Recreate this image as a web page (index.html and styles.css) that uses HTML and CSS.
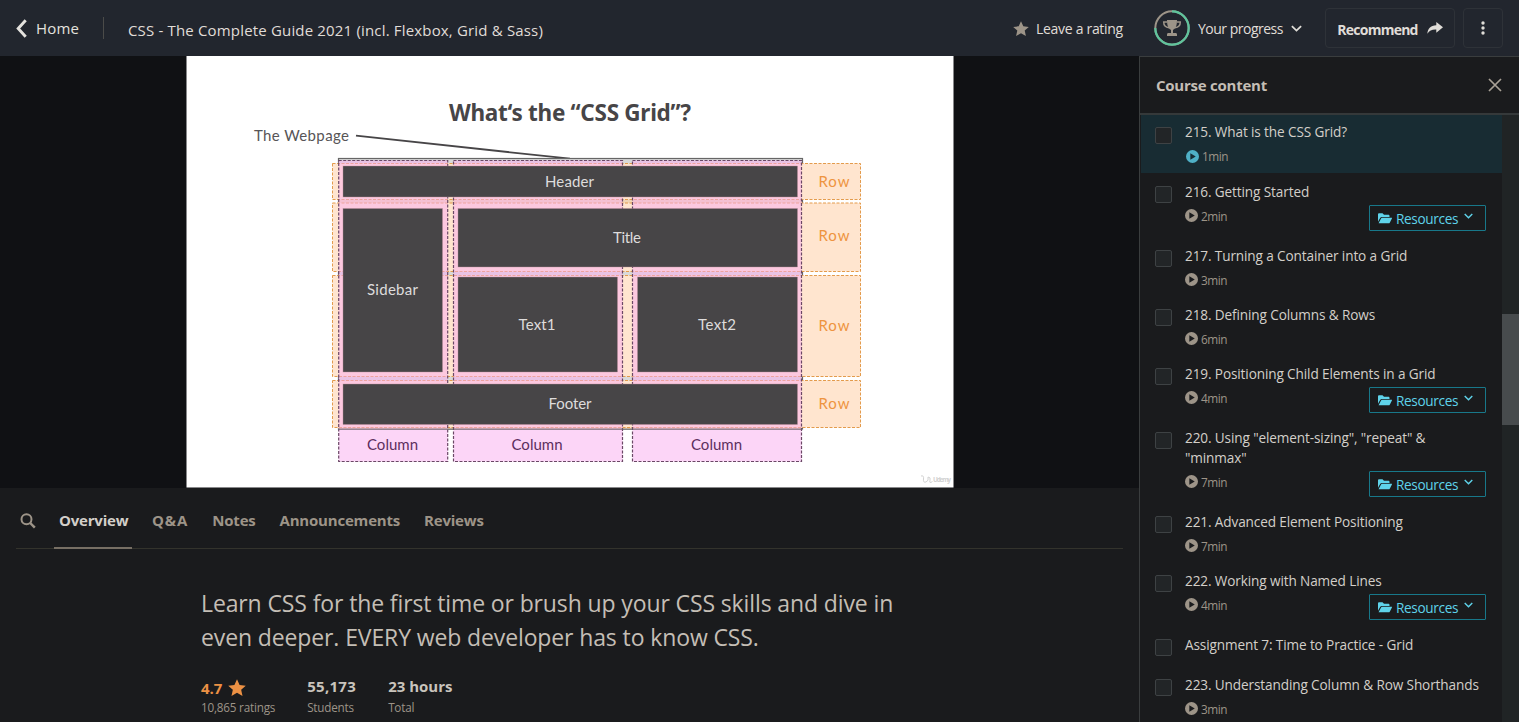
FILE: index.html
```html
<!DOCTYPE html>
<html lang="en">
<head>
<meta charset="utf-8">
<title>CSS - The Complete Guide 2021</title>
<link rel="stylesheet" href="styles.css">
</head>
<body>
<svg class="defs" width="0" height="0">
  <symbol id="play" viewBox="0 0 12 12"><path fill-rule="evenodd" d="M6 0a6 6 0 1 0 0 12A6 6 0 0 0 6 0zM4 3l5 3-5 3z"/></symbol>
  <symbol id="star" viewBox="0 0 16 16"><path d="M8 .3l2.300 5 5.500.6-4.100 3.700 1.200 5.500L8 12.300l-4.900 2.800 1.200-5.500L.2 5.900l5.500-.6z"/></symbol>
  <symbol id="folder" viewBox="0 0 14 11"><path d="M0 8.700V1.300C0 .6.500.2 1.200.2h3.300l1.500 1.500h4.300c.7 0 1.200.4 1.200 1.100v1.100H4c-.8 0-1.500.4-1.900 1.100z"/><path d="M.6 10.300l2.300-4.600c.3-.6.700-.9 1.300-.9h9.400c.4 0 .5.300.3.700l-2 3.900c-.3.600-.7.900-1.300.9z"/></symbol>
  <symbol id="chev" viewBox="0 0 10 6"><path d="M.8.8L5 4.900 9.200.8" fill="none" stroke="currentColor" stroke-width="1.600"/></symbol>
</svg>
<header class="topbar">
  <a class="home"><svg width="11" height="19" viewBox="0 0 11 19"><path d="M9.700 1.200L2.200 9.500l7.500 8.300" fill="none" stroke="currentColor" stroke-width="2.900"/></svg><span>Home</span></a>
  <span class="rule"></span>
  <h1 class="course">CSS - The Complete Guide 2021 (incl. Flexbox, Grid &amp; Sass)</h1>
  <a class="rate"><svg width="16" height="16"><use href="#star"/></svg><span>Leave a rating</span></a>
  <a class="progress">
    <svg class="ring" width="36" height="36" viewBox="0 0 36 36"><circle cx="18" cy="18" r="16.700" fill="none" stroke="#9d9488" stroke-width="2"/><path d="M18 1.300A16.700 16.700 0 1 1 1.300 18" fill="none" stroke="#5fc49c" stroke-width="2.200"/><g fill="#9d9488"><path d="M13 10h10c0 6-1.500 9-4 9.800V23h2.500c1 0 1.500.6 1.500 1.600V26H13v-1.400c0-1 .5-1.600 1.500-1.600H17v-3.200c-2.500-.8-4-3.800-4-9.800z"/><path d="M13 12H9.700c0 3.300 1.700 5.400 5.300 5.700M23 12h3.300c0 3.300-1.700 5.400-5.300 5.700" fill="none" stroke="#9d9488" stroke-width="1.500"/></g></svg>
    <span>Your progress</span><svg class="chev" width="11" height="7"><use href="#chev"/></svg>
  </a>
  <button class="box recommend"><span>Recommend</span><svg width="16" height="12" viewBox="0 0 16 12"><path d="M9.300 0L16 5.300l-6.700 5.400V7.500C5 7.300 2.500 8.300.4 11.800.5 6.700 3.500 3.500 9.300 3.200z"/></svg></button>
  <button class="box kebab"><svg width="4" height="14" viewBox="0 0 4 14"><circle cx="2" cy="2" r="1.700"/><circle cx="2" cy="7" r="1.700"/><circle cx="2" cy="12" r="1.700"/></svg></button>
</header>
<div class="page">
  <main class="main">
    <div class="stage">
      <svg class="slide" width="768" height="432" viewBox="186 56 768 432">
        <rect x="186.500" y="56" width="767" height="431.500" fill="#fff"/>
        <text class="s-title" x="449" y="120.500" textLength="242">What‘s the “CSS Grid”?</text>
        <text class="s-label" x="254" y="141" textLength="95">The Webpage</text>
        <path d="M356 135.700L570 158.700" stroke="#474547" stroke-width="1.800"/>
        <rect x="338.500" y="158.500" width="464" height="270.500" fill="#d9d9d9" stroke="#666" stroke-width="1.200"/>
        <path d="M338 200h464v3H338zM338 425h464v4H338z" fill="#f1d5b5"/>
        <g class="s-row"><rect x="332.500" y="163.500" width="528" height="36"/><rect x="332.500" y="203" width="528" height="68.500"/><rect x="332.500" y="275.500" width="528" height="101"/><rect x="332.500" y="380.500" width="528" height="47"/></g>
        <g class="s-col"><rect x="338.700" y="160.500" width="109" height="301"/><rect x="453.500" y="160.500" width="169" height="301"/><rect x="632.500" y="160.500" width="169" height="301"/></g>
        <g class="s-pad"><path d="M340 165H446V198H340zM455 165H621V198H455zM634 165H800V198H634z"/></g>
        <path d="M338 429.200H802" stroke="#666" stroke-width="1.200" opacity=".7"/>
        <g class="s-item"><rect x="343" y="166" width="454.500" height="31"/><rect x="343" y="208.500" width="99.500" height="163.500"/><rect x="458" y="208.500" width="339.500" height="58.500"/><rect x="458" y="277" width="159.500" height="95"/><rect x="637.500" y="277" width="160" height="95"/><rect x="343" y="384" width="454.500" height="40.500"/></g>
        <g class="s-white"><text x="545" y="187" textLength="49">Header</text><text x="613" y="243" textLength="28">Title</text><text x="367" y="295" textLength="51">Sidebar</text><text x="518.500" y="330" textLength="37">Text1</text><text x="698" y="330" textLength="38">Text2</text><text x="548.500" y="409" textLength="43">Footer</text></g>
        <g class="s-purple"><text x="367" y="450" textLength="51">Column</text><text x="511.500" y="450" textLength="51">Column</text><text x="691" y="450" textLength="51">Column</text></g>
        <g class="s-orange"><text x="818.500" y="187" textLength="31">Row</text><text x="818.500" y="241" textLength="31">Row</text><text x="818.500" y="331" textLength="31">Row</text><text x="818.500" y="409" textLength="31">Row</text></g>
        <path d="M921 476q3-1 2.500 3t2.500 3 2-5q3 0 2 3.500t2.500 1" fill="none" stroke="#d2d2d2"/>
        <text class="s-mark" x="933" y="482" textLength="18">Udemy</text>
      </svg>
    </div>
    <nav class="tabs">
      <svg class="search" width="16" height="16" viewBox="0 0 16 16"><circle cx="6.500" cy="6.300" r="5" fill="none" stroke="currentColor" stroke-width="2"/><path d="M10.200 10l4.600 4.700" stroke="currentColor" stroke-width="2.500"/></svg>
      <a class="tab active">Overview</a><a class="tab qa">Q&amp;A</a><a class="tab">Notes</a><a class="tab">Announcements</a><a class="tab">Reviews</a>
    </nav>
    <section class="about">
      <p class="lead">Learn CSS for the first time or brush up your CSS skills and dive in<br>even deeper. EVERY web developer has to know CSS.</p>
      <div class="stats">
        <div class="stat rating"><b>4.7<svg width="18" height="18"><use href="#star"/></svg></b><small>10,865 ratings</small></div>
        <div class="stat students"><b>55,173</b><small>Students</small></div>
        <div class="stat"><b>23 hours</b><small>Total</small></div>
      </div>
    </section>
  </main>
  <aside class="side">
    <div class="side-head"><h2>Course content</h2><svg width="14" height="14" viewBox="0 0 14 14"><path d="M1 1l12 12M13 1L1 13" stroke="currentColor" stroke-width="1.700"/></svg></div>
    <div class="scroll">
      <ul class="list">
        <li class="item current"><i class="check"></i><div class="body"><p>215. What is the CSS Grid?</p><div class="meta"><span class="time"><svg width="13" height="13"><use href="#play"/></svg>1min</span></div></div></li>
        <li class="item"><i class="check"></i><div class="body"><p>216. Getting Started</p><div class="meta"><span class="time"><svg width="13" height="13"><use href="#play"/></svg>2min</span><button class="res"><svg width="14" height="11"><use href="#folder"/></svg><span>Resources</span><svg class="chev" width="9" height="6"><use href="#chev"/></svg></button></div></div></li>
        <li class="item"><i class="check"></i><div class="body"><p>217. Turning a Container into a Grid</p><div class="meta"><span class="time"><svg width="13" height="13"><use href="#play"/></svg>3min</span></div></div></li>
        <li class="item"><i class="check"></i><div class="body"><p>218. Defining Columns &amp; Rows</p><div class="meta"><span class="time"><svg width="13" height="13"><use href="#play"/></svg>6min</span></div></div></li>
        <li class="item"><i class="check"></i><div class="body"><p>219. Positioning Child Elements in a Grid</p><div class="meta"><span class="time"><svg width="13" height="13"><use href="#play"/></svg>4min</span><button class="res"><svg width="14" height="11"><use href="#folder"/></svg><span>Resources</span><svg class="chev" width="9" height="6"><use href="#chev"/></svg></button></div></div></li>
        <li class="item"><i class="check"></i><div class="body"><p>220. Using "element-sizing", "repeat" &amp;<br>"minmax"</p><div class="meta"><span class="time"><svg width="13" height="13"><use href="#play"/></svg>7min</span><button class="res"><svg width="14" height="11"><use href="#folder"/></svg><span>Resources</span><svg class="chev" width="9" height="6"><use href="#chev"/></svg></button></div></div></li>
        <li class="item"><i class="check"></i><div class="body"><p>221. Advanced Element Positioning</p><div class="meta"><span class="time"><svg width="13" height="13"><use href="#play"/></svg>7min</span></div></div></li>
        <li class="item"><i class="check"></i><div class="body"><p>222. Working with Named Lines</p><div class="meta"><span class="time"><svg width="13" height="13"><use href="#play"/></svg>4min</span><button class="res"><svg width="14" height="11"><use href="#folder"/></svg><span>Resources</span><svg class="chev" width="9" height="6"><use href="#chev"/></svg></button></div></div></li>
        <li class="item"><i class="check"></i><div class="body"><p>Assignment 7: Time to Practice - Grid</p></div></li>
        <li class="item"><i class="check"></i><div class="body"><p>223. Understanding Column &amp; Row Shorthands</p><div class="meta"><span class="time"><svg width="13" height="13"><use href="#play"/></svg>3min</span></div></div></li>
      </ul>
      <div class="track"><div class="thumb"></div></div>
    </div>
  </aside>
</div>
</body>
</html>
```
FILE: styles.css
```css
* { box-sizing: border-box; }
body { margin: 0; height: 722px; overflow: hidden; background: #1a1b1d; color: #d3cfc9; font: 13.600px/20px "Open Sans", "Noto Sans", sans-serif; }
h1, h2, p, ul { margin: 0; padding: 0; font-weight: 400; }
svg { display: block; flex: none; fill: currentColor; }
button { font: inherit; color: inherit; background: none; margin: 0; }
span, small, p { white-space: nowrap; }
.defs { position: absolute; }

.topbar { display: flex; align-items: center; height: 56px; padding: 0 16px; background: #22262e; color: #e0ddd8; font-size: 14px; }
.home { display: flex; align-items: center; gap: 9px; width: 80px; padding-top: 1px; font-size: 15px; letter-spacing: .15px; color: #e4e2de; }
.home span { margin-top: -1px; }
.rule { width: 1px; height: 22px; background: #4b4b49; margin: 0 24px 0 7px; }
.course { font-size: 15px; letter-spacing: .17px; padding-top: 3px; margin-right: auto; }
.rate { display: flex; align-items: center; gap: 7px; padding-top: 2px; width: 110px; letter-spacing: -.3px; }
.rate svg { color: #9d9488; }
.progress { display: flex; align-items: center; margin-left: 31px; width: 148px; letter-spacing: -.5px; }
.progress .ring { margin-right: 8px; }
.progress span { padding-top: 2px; width: 85px; }
.progress .chev { margin-left: 8px; }
.box { display: flex; align-items: center; justify-content: center; height: 40px; border: 1px solid #2e3238; border-radius: 4px; padding: 0; }
.recommend { width: 130px; margin-left: 23px; gap: 9px; font-weight: 700; letter-spacing: -.75px; }
.recommend span { padding-top: 3px; }
.kebab { width: 40px; margin-left: 8px; }

.page { display: flex; height: 666px; }
.main { width: 1139px; display: flex; flex-direction: column; }
.stage { display: flex; justify-content: center; height: 432px; background: #101114; }
.s-title { font: 700 22.500px "Noto Sans", sans-serif; fill: #474547; }
.s-label, .s-white, .s-purple, .s-orange { font: 15px Lato, sans-serif; }
.s-label { fill: #575557; }
.s-white { fill: #dedcdc; }
.s-purple { fill: #5c2e5e; }
.s-orange { fill: #ee9440; }
.s-row { fill: #ffe5cf; stroke: #e39b4c; stroke-dasharray: 3 1.500; }
.s-col { fill: rgba(249, 171, 239, .5); stroke: #6b4766; stroke-dasharray: 3 1.500; stroke-width: 1.200; }
.s-pad { fill: #ffc9dc; opacity: .6; }
.s-item { fill: #474547; stroke: #b98a9b; stroke-width: .4; }
.s-mark { font: 700 6.500px "Open Sans", sans-serif; fill: #d2d2d2; }

.tabs { display: flex; height: 61px; margin: 0 16px; border-bottom: 1px solid #33332c; color: #9d9488; font-weight: 700; font-size: 15px; letter-spacing: -.2px; }
.search { margin: 25px 18px 0 4px; }
.tab { padding: 22px 4px 0; margin-right: 16px; height: 61px; }
.qa { letter-spacing: .9px; }
.active { width: 78px; padding-left: 5px; padding-right: 0; color: #d3cfc9; border-bottom: 2px solid #776f64; }
.about { padding: 38px 0 0 201px; }
.lead { font-size: 23px; letter-spacing: -.12px; line-height: 33.500px; color: #c4beb5; }
.stats { display: flex; margin-top: 21px; }
.stat { display: flex; flex-direction: column; margin-right: 32px; }
.stat b { display: flex; align-items: center; gap: 7px; height: 22px; font-size: 15px; color: #c9c4bc; }
.stat small { font-size: 11.700px; letter-spacing: -.2px; line-height: 20px; color: #9d9488; }
.students b { letter-spacing: .3px; }
.rating b { color: #ec9144; padding-top: 3px; }
.rating b svg { margin-left: -1px; }

.side { width: 380px; display: flex; flex-direction: column; border-left: 1px solid #3a3d3e; border-top: 1px solid #3a3d3e; }
.side-head { display: flex; align-items: center; justify-content: space-between; flex: none; height: 58px; padding: 0 17px 0 16px; border-bottom: 2px solid #35393a; color: #a9a196; }
.side-head h2 { font-size: 15px; font-weight: 700; letter-spacing: -.24px; color: #c4beb5; }
.scroll { display: flex; flex: 1; min-height: 0; }
.list { width: 362px; margin-top: -1px; list-style: none; }
.item { display: flex; min-height: 40px; padding: 9px 16px 6px 15px; }
.current { margin-left: 1px; padding-left: 14px; background: #182c33; border-top: 1px solid #35393a; padding-top: 7px; padding-bottom: 7px; }
.check { flex: none; width: 17px; height: 17px; margin: 4px 13px 0 0; border: 1px solid #3e4244; border-radius: 2px; background: #222527; }
.current .check { margin-top: 5px; }
.body { flex: 1; letter-spacing: -.12px; }
.meta { display: flex; justify-content: space-between; align-items: flex-start; margin-top: 3px; }
.current .meta { margin-top: 4px; padding-bottom: 0; }
.current .time { height: 20px; }
.time { display: flex; align-items: center; gap: 3px; height: 21px; font-size: 11.800px; letter-spacing: -.45px; color: #9d9488; }
.current .time svg { color: #4fb0c6; margin-left: 1px; }
.res { display: flex; align-items: center; width: 117px; height: 26px; padding: 0 8px; border: 1px solid #18788a; border-radius: 1px; letter-spacing: -.35px; color: #5fd3ea; }
.res span { width: 62px; margin: 1px 6px 0 4px; text-align: left; }
.res .chev { margin-bottom: 4px; }
.track { width: 17px; padding-top: 199px; background: #202425; }
.thumb { height: 111px; background: #474b4d; }
```
